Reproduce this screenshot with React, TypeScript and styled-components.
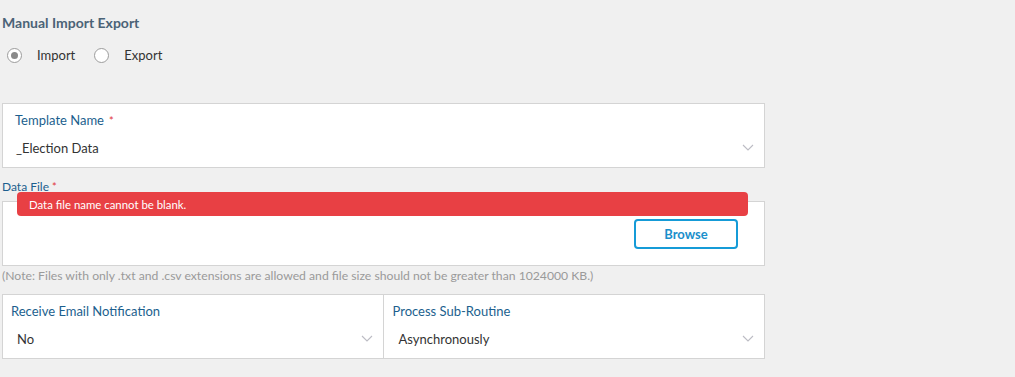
import styled, { createGlobalStyle } from "styled-components";

const GlobalStyle = createGlobalStyle`
  body {
    margin: 0;
    background: #f0f0f0;
    font-family: Lato, "Open Sans", Arial, sans-serif;
  }
`;

const Page = styled.div`
  width: 763px;
  padding: 14px 0 0 2px;
`;

const Title = styled.h2`
  margin: 0;
  font-size: 14px;
  font-weight: 700;
  color: #4b6377;
  line-height: 17px;
`;

const RadioRow = styled.div`
  display: flex;
  align-items: center;
  gap: 19px;
  margin: 15px 0 0 5px;
  height: 18px;
`;

const RadioLabel = styled.label`
  display: flex;
  align-items: center;
  gap: 15px;
  font-size: 13px;
  color: #333;
`;

const RadioCircle = styled.span<{ $checked?: boolean }>`
  width: 15px;
  height: 15px;
  box-sizing: border-box;
  border-radius: 50%;
  border: 1px solid #9c9c9c;
  background: #fff;
  display: flex;
  align-items: center;
  justify-content: center;

  &::after {
    content: "";
    width: 7px;
    height: 7px;
    border-radius: 50%;
    background: ${(p) => (p.$checked ? "#8a8a8a" : "transparent")};
  }
`;

const Box = styled.div`
  background: #fff;
  border: 1px solid #d4d4d4;
  height: 63px;
  box-sizing: content-box;
`;

const SelectBox = styled(Box)`
  margin-top: 39px;
  padding: 0;
`;

const Field = styled.div<{ $pad?: number }>`
  position: relative;
  flex: 1;
  height: 100%;
  padding: 8px 0 0 ${(p) => p.$pad ?? 12}px;
  box-sizing: border-box;

  & + & {
    border-left: 1px solid #d4d4d4;
  }
`;

const FieldLabel = styled.div`
  font-size: 13px;
  color: #1c5f8e;
  line-height: 17px;
`;

const Required = styled.span`
  color: #e0343c;
  margin-left: 5px;
  font-size: 11px;
`;

const Value = styled.div<{ $indent?: number }>`
  font-size: 13px;
  color: #333;
  margin-top: 11px;
  padding-left: ${(p) => p.$indent ?? 1}px;
  line-height: 17px;
`;

const Chevron = styled.svg`
  position: absolute;
  right: 10px;
  top: 40px;
`;

const DataLabel = styled.div`
  margin-top: 11px;
  font-size: 12px;
  color: #1c5f8e;
  line-height: 15px;
`;

const FileArea = styled.div`
  position: relative;
  padding-top: 7px;
`;

const FileBox = styled(Box)`
  display: flex;
  justify-content: flex-end;
  align-items: flex-start;
  padding-right: 26px;
`;

const BrowseButton = styled.button`
  margin-top: 17px;
  width: 104px;
  height: 30px;
  background: #fff;
  border: 2px solid #159bd7;
  border-radius: 4px;
  color: #1a8fcb;
  font-family: Lato, Arial, sans-serif;
  font-weight: 700;
  font-size: 13px;
  cursor: pointer;
`;

const ErrorToast = styled.div`
  position: absolute;
  left: 15px;
  top: -2px;
  width: 731px;
  height: 24px;
  box-sizing: border-box;
  padding: 0 12px;
  display: flex;
  align-items: center;
  background: #e84044;
  border-radius: 4px;
  color: #fff;
  font-size: 11.4px;
`;

const Note = styled.p`
  margin: 2px 0 0;
  font-size: 12.2px;
  color: #9a9a9a;
  line-height: 15px;
`;

const SplitBox = styled(Box)`
  margin-top: 11px;
  display: flex;
`;

const ChevronIcon = () => (
  <Chevron width="12" height="7" viewBox="0 0 12 7">
    <path d="M1 1 L6 6 L11 1" fill="none" stroke="#bcbcc4" strokeWidth="1.1" />
  </Chevron>
);

export default function App() {
  return (
    <>
      <GlobalStyle />
      <Page>
        <Title>Manual Import Export</Title>
        <RadioRow>
          <RadioLabel>
            <RadioCircle $checked />
            Import
          </RadioLabel>
          <RadioLabel>
            <RadioCircle />
            Export
          </RadioLabel>
        </RadioRow>

        <SelectBox>
          <Field $pad={12}>
            <FieldLabel>
              Template Name<Required>*</Required>
            </FieldLabel>
            <Value>_Election Data</Value>
            <ChevronIcon />
          </Field>
        </SelectBox>

        <DataLabel>
          Data File<Required style={{ marginLeft: 3 }}>*</Required>
        </DataLabel>
        <FileArea>
          <ErrorToast>Data file name cannot be blank.</ErrorToast>
          <FileBox>
            <BrowseButton>Browse</BrowseButton>
          </FileBox>
        </FileArea>
        <Note>
          (Note: Files with only .txt and .csv extensions are allowed and file size should not be greater than 1024000 KB.)
        </Note>

        <SplitBox>
          <Field $pad={8}>
            <FieldLabel>Receive Email Notification</FieldLabel>
            <Value $indent={6}>No</Value>
            <ChevronIcon />
          </Field>
          <Field $pad={9}>
            <FieldLabel>Process Sub-Routine</FieldLabel>
            <Value $indent={6}>Asynchronously</Value>
            <ChevronIcon />
          </Field>
        </SplitBox>
      </Page>
    </>
  );
}
